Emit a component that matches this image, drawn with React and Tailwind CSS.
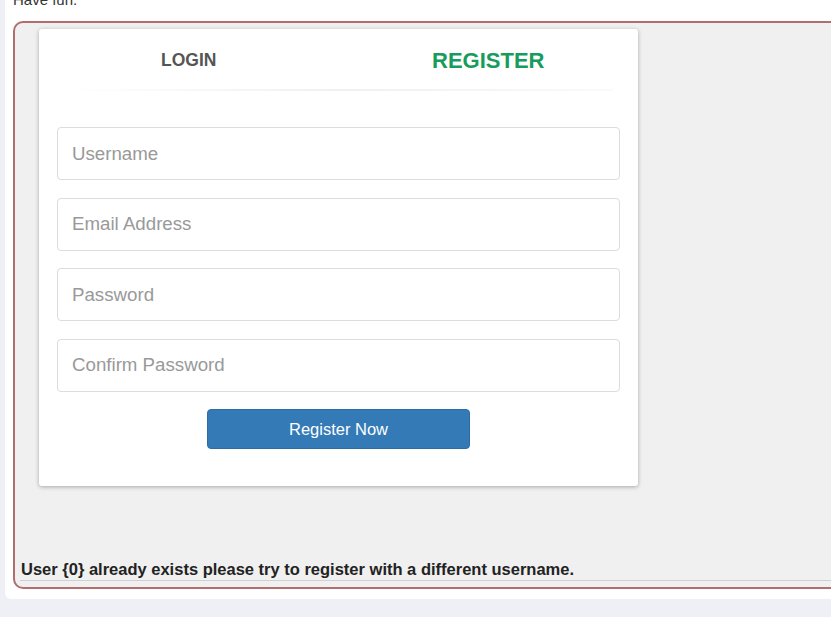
import React from 'react';

const fields = ['Username', 'Email Address', 'Password', 'Confirm Password'];

const App = () => {
  return (
    <div className="h-[617px] overflow-hidden bg-[#eff0f5] pl-[5px] font-['Liberation_Sans',Arial,sans-serif]">
      <div className="h-[599px] bg-white rounded-bl-[6px] pl-[8px] overflow-hidden">
        <p className="-mt-[8px] text-[15px] leading-[16px] text-[#333]">Have fun.</p>

        {/* Register box */}
        <div className="mt-[13px] w-[830px] h-[568px] border-2 border-[#b06f6e] rounded-[10px] bg-[#f0f0f0] flex flex-col">
          <div className="pl-[24px] pt-[6px]">
            <div className="w-[599px] bg-white rounded-[3px] shadow-[0_1px_4px_rgba(0,0,0,0.3)] px-[18px] pb-[37px]">
              <div className="flex h-[60px] items-center -mx-[18px]">
                <div className="w-1/2 text-center text-[17.5px] font-bold text-[#555] pt-[2px]">LOGIN</div>
                <div className="w-1/2 text-center text-[22px] font-bold text-[#189c5c] pt-[2px]">REGISTER</div>
              </div>
              <div className="mx-[7px] h-[2px] bg-gradient-to-r from-transparent via-[#f0f0f0] to-[#fafafa]"></div>

              <form className="mt-[36px] flex flex-col gap-[17.5px]">
                {fields.map((f) => (
                  <input
                    key={f}
                    type={f.includes('Password') ? 'password' : 'text'}
                    placeholder={f}
                    className="h-[53px] w-full border border-[#dcdcdc] rounded-[4px] px-[14px] text-[18.7px] text-[#555] placeholder:text-[#999] outline-none"
                  />
                ))}
                <div className="flex justify-center">
                  <button
                    type="button"
                    className="w-[263px] h-[40px] bg-[#337ab7] border border-[#2e6da4] rounded-[4px] text-white text-[16.5px]"
                  >
                    Register Now
                  </button>
                </div>
              </form>
            </div>
          </div>

          <div className="flex-1"></div>
          <div className="ml-[5px] mb-[6px] border-b border-[#d0d0d0] pl-px pb-[1px]">
            <p className="text-[16.5px] leading-[19px] font-bold text-[#222]">
              User {'{0}'} already exists please try to register with a different username.
            </p>
          </div>
        </div>
      </div>
    </div>
  );
};

export default App;
